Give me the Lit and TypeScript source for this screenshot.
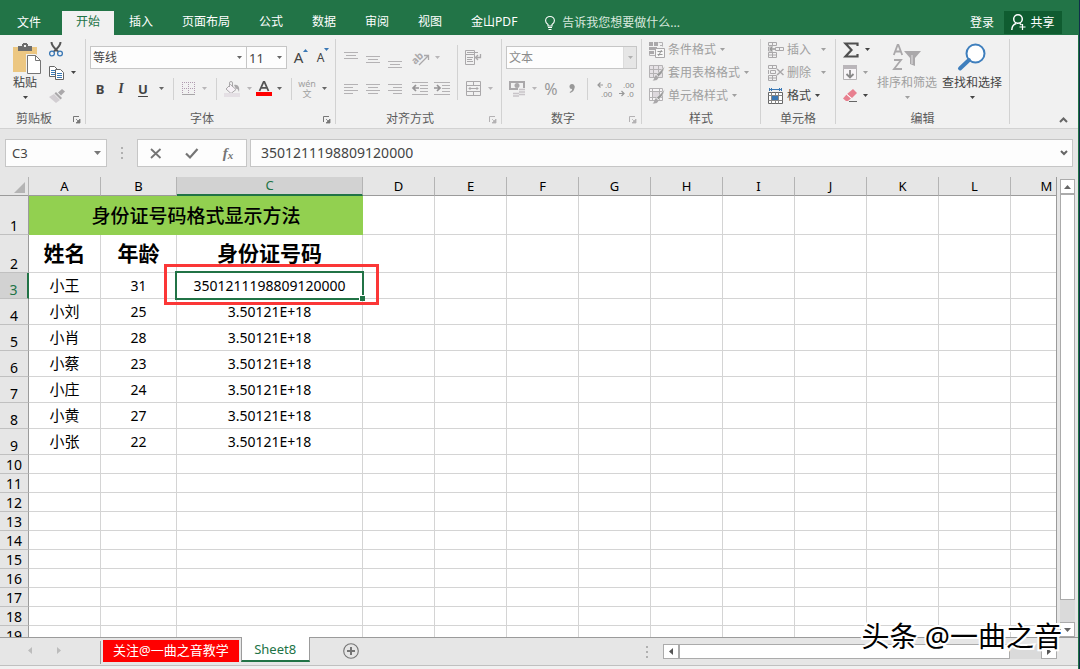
import { LitElement, html, css, svg, nothing } from "lit";
import type { TemplateResult } from "lit";
import { customElement, property } from "lit/decorators.js";
import { classMap } from "lit/directives/class-map.js";

const icon = (w: number, h: number, body: unknown) =>
  html`<svg width=${w} height=${h} viewBox="0 0 ${w} ${h}" fill="none" aria-hidden="true">${body}</svg>`;

const caret = () => icon(5, 3, svg`<path d="M0 0h5L2.500 3z" fill="currentColor"/>`);

const lines = (ys: number[], spans: number[][]) =>
  ys.map((y, i) => svg`<path d="M${spans[i][0]} ${y + 0.5}H${spans[i][1]}" stroke="#b4b2b4"/>`);

const FULL = [0, 14];
const MID = [2, 12];

const icons = {
  paste: icon(28, 32, svg`
    <path d="M0 4h24v25H0z" fill="#ecc782"/>
    <path d="M5 3h4V1h1V0h4v1h1v2h4v5H5z" fill="#6d6d6d"/><path d="M11 2h2v2h-2z" fill="#f1f1f1"/>
    <path d="M13 11h10l5 5v15H13z" fill="#f1f1f1"/>
    <path d="M14.500 12.500h8l5 5v13h-13z" fill="#fff" stroke="#757575"/><path d="M22.500 12.500v5h5" stroke="#757575"/>`),
  cut: icon(14, 15, svg`
    <path d="M2.500 0c0 4 3 6 6.500 9.500M11.500 0c0 4-3 6-6.500 9.500" stroke="#555" stroke-width="2"/>
    <circle cx="3" cy="11.500" r="2.400" stroke="#3a78b5" stroke-width="1.300"/>
    <circle cx="11" cy="11.500" r="2.400" stroke="#3a78b5" stroke-width="1.300"/>`),
  copy: icon(16, 14, svg`
    <path d="M.5.500h5l3 3v7h-8z" fill="#fff" stroke="#666"/>
    <path d="M2 4.500h4M2 6.500h4M2 8.500h4" stroke="#3a78b5"/>
    <path d="M6.500 3.500h5l3 3v7h-8z" fill="#fff" stroke="#666"/>
    <path d="M8 7.500h5M8 9.500h5M8 11.500h5" stroke="#3a78b5"/>`),
  brush: icon(16, 14, svg`
    <path d="M13 0l3 2.500-4 4L9 3.500z" fill="#aaa8aa"/>
    <path d="M7 3l6 6-1.500 1.500-6-6z" fill="#aaa8aa"/><path d="M5 5l6 6-4 3L0 8z" fill="#d2ced2"/>`),
  grow: html`<span class="sized big">A</span>${icon(5, 3, svg`<path d="M0 3h5L2.500 0z" fill="#3a78b5"/>`)}`,
  shrink: html`<span class="sized">A</span>${icon(5, 3, svg`<path d="M0 0h5L2.500 3z" fill="#3a78b5"/>`)}`,
  border: icon(13, 13, svg`
    <path d="M.5 0v12M6.500 0v12M12.500 0v12M0 .500h13M0 6.500h13" stroke="#b09cb0" stroke-dasharray="1 1"/>
    <path d="M0 12.500h13" stroke="#a8a6a8"/>`),
  fill: icon(17, 16, svg`
    <path d="M6.500 3.500l5.500 5-5 4-5-4.500z" fill="#f7f2f7" stroke="#aaa8aa"/>
    <path d="M5.500 6V2a1.500 1.500 0 0 1 3 0v4" stroke="#aaa8aa"/>
    <path d="M10 4c4-1 6 2 5 7-1-3-2-4-3-3z" fill="#aaa8aa"/><path d="M0 12h16v4H0z" fill="#e4dfe4"/>`),
  fontColor: icon(16, 15, svg`
    <path d="M0 11h16v4H0z" fill="#f00"/>
    <path d="M3.500 10L7.600 1h.8l4.100 9M5.500 6.800h5" stroke="#555" stroke-width="1.800"/>`),
  top: icon(14, 20, lines([4, 7, 10], [FULL, MID, FULL])),
  middle: icon(14, 20, lines([8, 11, 14], [FULL, MID, FULL])),
  bottom: icon(14, 20, lines([13, 16, 19], [FULL, MID, FULL])),
  left: icon(14, 10, lines([0, 3, 6, 9], [FULL, [0, 9], FULL, [0, 9]])),
  center: icon(14, 10, lines([0, 3, 6, 9], [FULL, MID, FULL, MID])),
  right: icon(14, 10, lines([0, 3, 6, 9], [FULL, [5, 14], FULL, [5, 14]])),
  rotate: icon(17, 16, svg`
    <text x="-1" y="11" transform="rotate(-45 6 8)" class="slant">ab</text>
    <path d="M7 15l9-9M12 5.500h4.500V10" stroke="#aaa8aa" stroke-width="1.300"/>`),
  outdent: icon(16, 13, svg`
    ${lines([0, 3, 6, 9, 12], [[0, 16], [8, 16], [8, 16], [8, 16], [0, 16]])}
    <path d="M1 6h6M4 3L1 6l3 3" stroke="#969496" stroke-width="1.700"/>`),
  indent: icon(16, 13, svg`
    ${lines([0, 3, 6, 9, 12], [[0, 16], [8, 16], [8, 16], [8, 16], [0, 16]])}
    <path d="M0 6h6M3 3l3 3-3 3" stroke="#969496" stroke-width="1.700"/>`),
  wrap: icon(16, 15, svg`
    <path d="M.5.500h9v4h-9zM.5 4.500h9v10h-9z" stroke="#aaa8aa"/>
    <path d="M2 2.500h11M2 7.500h6M2 9.500h5M2 11.500h6" stroke="#aaa8aa"/>
    <path d="M15.500 4v3.500H11M13 5l-2.500 2.500L13 10" stroke="#aaa8aa" stroke-width="1.300"/>`),
  merge: icon(15, 15, svg`
    <path d="M.5.500h14v14H.5zM.5 4.500h14M.5 10.500h14M7.500 0v4M7.500 11v4" stroke="#aaa8aa"/>
    <path d="M3 7.500h9M4.500 6L3 7.500 4.500 9M10.500 6L12 7.500 10.500 9" stroke="#aaa8aa"/>`),
  money: icon(17, 16, svg`
    <path d="M1 1h14v7H1z" stroke="#aaa8aa" stroke-width="2"/><circle cx="8" cy="4.500" r="2.500" fill="#aaa8aa"/>
    <path d="M9 7h7v8H9z" fill="#f1f1f1"/>
    <path d="M10 8.500h6M10 11h6M10 13.500h6M4 12.500h6M4 15h6" stroke="#c8c4c8" stroke-width="1.500"/>`),
  comma: icon(6, 9, svg`<circle cx="3" cy="2.500" r="2.500" fill="#999"/><path d="M5.500 2c.300 4-1.500 6-4.500 7l-.3-1C2.500 7 3.500 6 3 4z" fill="#999"/>`),
  moreDec: icon(15, 16, svg`
    <path d="M1 4h5M3.500 1.500L1 4l2.500 2.500" stroke="#999" stroke-width="1.200"/>
    <text x="8" y="7" class="tiny">.0</text><text x="4" y="16" class="tiny">.00</text>`),
  lessDec: icon(15, 16, svg`
    <text x="4" y="7" class="tiny">.00</text><text x="8" y="16" class="tiny">.0</text>
    <path d="M0 12.500h5M2.500 10L5 12.500 2.500 15" stroke="#999" stroke-width="1.200"/>`),
  conditional: icon(16, 16, svg`
    <path d="M0 0h4v4H0zM5 0h4v4H5zM0 5h8v3H0zM0 9h5v3H0z" fill="#aaa8aa"/>
    <path d="M9.500.500h4v4M.5 12v1.500H6M11 3.500h3" stroke="#b4b2b4"/>
    <path d="M6.500 6.500h9v9h-9z" fill="#f8f8f8" stroke="#aaa8aa"/>
    <path d="M8.500 9.500h5M8.500 12.500h5M12.500 8l-3 6" stroke="#999"/>`),
  tableStyle: icon(16, 16, svg`
    <path d="M.5.500h13v12H.5z" fill="#e6e2e6" stroke="#b4b2b4"/><path d="M.5 4.500h13M.5 8.500h13M4.500.500v12M9.500.500v12" stroke="#b4b2b4"/>
    <path d="M15.500 1.500c-1 5-3 8-6 10l-2-2c3-2 5-5 8-8z" fill="#999" stroke="#f1f1f1" stroke-width=".5"/>
    <path d="M7 10l2.500 2.500c-1 3-3 3-6 3 2-1 1.500-4 3.500-5.500z" fill="#aaa8aa"/>`),
  cellStyle: icon(16, 16, svg`
    <path d="M.5.500h13v12H.5z" fill="#f6f4f6" stroke="#b4b2b4"/><path d="M.5 3.500h13M3.500.500v12M10.500.500v12M.5 9.500h13" stroke="#b4b2b4"/>
    <path d="M4 4h6v5H4z" fill="#ddd8dd"/>
    <path d="M15.500 1.500c-1 5-3 8-6 10l-2-2c3-2 5-5 8-8z" fill="#999" stroke="#f1f1f1" stroke-width=".5"/>
    <path d="M7 10l2.500 2.500c-1 3-3 3-6 3 2-1 1.500-4 3.500-5.500z" fill="#aaa8aa"/>`),
  insert: icon(16, 16, svg`
    <path d="M.5.500h8v3h-8zM4.500.500v3M.5 10.500h8v5h-8zM4.500 10.500v5M.5 13h8M3.500 5H.5v4h3" stroke="#aaa8aa"/>
    <path d="M7.500 5.500h8v3h-8zM11.500 5.500v3" stroke="#aaa8aa"/><path d="M2 7h5M4.500 4.500L2 7l2.500 2.500" stroke="#999" stroke-width="1.300"/>`),
  remove: icon(16, 16, svg`
    <path d="M.5.500h8v3h-8zM4.500.500v3M.5 10.500h8v5h-8zM4.500 10.500v5M.5 13h8M.5 5v4M2.500 5.500h5v3h-5z" stroke="#aaa8aa"/>
    <path d="M9 4l6.500 6M15.500 4L9 10" stroke="#aaa8aa" stroke-width="1.500"/>`),
  format: icon(16, 16, svg`
    <path d="M1.500 0v3M13.500 0v3M2 1.500h11M4 0L2.500 1.500 4 3M11 0l1.500 1.500L11 3" stroke="#3a78b5"/>
    <path d="M.5 4.500h14v11H.5z" fill="#fff" stroke="#666"/>
    <path d="M.5 7.500h14M.5 12.500h14M3.500 4.500v11M10.500 4.500v11M7.500 4.500v11" stroke="#888"/><path d="M4 8h6v4H4z" fill="#3a78b5"/>`),
  sum: icon(16, 16, svg`<path d="M14.500 4V1.500H2.500L8.500 8l-6 6.500h12V12" stroke="#505050" stroke-width="2.200"/>`),
  fillDown: icon(14, 15, svg`
    <path d="M.5.500h13v14H.5z" fill="#f8f5f8" stroke="#b4b2b4"/><path d="M0 0h14v4H0z" fill="#bab6ba"/>
    <path d="M7 5v7M3.500 9L7 12.500 10.500 9" stroke="#888" stroke-width="1.800"/>`),
  eraser: icon(14, 13, svg`
    <path d="M10 0l4 4-5 5-5-4z" fill="#e8808f"/><path d="M3.500 5.500l4.500 4-3 2.500H3L0 9.500z" fill="#e8808f"/>
    <path d="M3.500 5l5 4.500" stroke="#fff"/><path d="M6 12.500h8" stroke="#666"/>`),
  sort: icon(28, 27, svg`
    <path d="M.8 12L4.600 2h.8L9.200 12M2.300 8.500h5.400" stroke="#aaa8aa" stroke-width="1.800"/>
    <path d="M1 17h7L1 26h8" stroke="#aaa8aa" stroke-width="1.800"/>
    <path d="M11 8h17l-6 7v8l-5-2v-6z" fill="#aaa8aa"/><path d="M19 12v9" stroke="#e4e2e4"/>`),
  find: icon(28, 28, svg`
    <circle cx="17.500" cy="10.500" r="9" fill="#fff" stroke="#3f7fbd" stroke-width="2"/>
    <path d="M11 17l-9 8.500" stroke="#3f7fbd" stroke-width="4" stroke-linecap="round"/>`),
  launcher: icon(7, 7, svg`<path d="M.5 6V.500H6" stroke="currentColor"/><path d="M7 3v4H3zM3 3l3 3" fill="currentColor" stroke="currentColor" stroke-width=".8"/>`),
  bulb: icon(10, 14, svg`
    <path d="M3 10V8.500C1.500 7.500.6 6.300.6 4.700a4.400 4.200 0 0 1 8.800 0C9.400 6.300 8.500 7.500 7 8.500V10z" stroke="#fff" stroke-width="1.100"/>
    <path d="M3 11.500h4M3.500 13.500h3" stroke="#fff"/>`),
  person: icon(15, 17, svg`
    <circle cx="7" cy="5" r="4.300" stroke="#fff" stroke-width="1.500"/>
    <path d="M.8 16c0-3 1.500-5.500 4.500-6.500M8.500 9.300l2 1.700" stroke="#fff" stroke-width="1.500"/><path d="M11.500 10v6M8.500 13h6" stroke="#fff" stroke-width="1.200"/>`),
  chevronUp: icon(9, 6, svg`<path d="M1 5l3.500-3.500L8 5" stroke="#666" stroke-width="2"/>`),
  chevronDown: icon(8, 6, svg`<path d="M1 1l3 3 3-3" stroke="#666" stroke-width="2"/>`),
  cross: icon(12, 11, svg`<path d="M1 1l9.500 9M10.500 1L1 10" stroke="#757575" stroke-width="1.800"/>`),
  check: icon(14, 11, svg`<path d="M1 5.500l4 4L12.500 1" stroke="#757575" stroke-width="2.200"/>`),
  plus: icon(16, 16, svg`<circle cx="8" cy="8" r="7.300" stroke="#757575" stroke-width="1.100"/><path d="M8 4v8M4 8h8" stroke="#757575" stroke-width="2"/>`),
  triLeft: icon(4, 7, svg`<path d="M4 0v7L0 3.500z" fill="currentColor"/>`),
  triRight: icon(4, 7, svg`<path d="M0 0v7l4-3.500z" fill="currentColor"/>`),
  triUp: icon(7, 4, svg`<path d="M0 4h7L3.500 0z" fill="currentColor"/>`),
  triDown: icon(7, 4, svg`<path d="M0 0h7L3.500 4z" fill="currentColor"/>`),
  dots: icon(2, 12, svg`<path d="M0 0h2v2H0zM0 5h2v2H0zM0 10h2v2H0z" fill="#b0b0b0"/>`),
  corner: icon(11, 11, svg`<path d="M11 0v11H0z" fill="#b4b4b4"/>`),
};

const reset = css`
  :host, * { box-sizing: border-box; }
  svg { display: block; flex: none; overflow: visible; }
  button, input, select {
    margin: 0; padding: 0; border: 0; border-radius: 0; background: none;
    font: inherit; color: inherit; outline: none; appearance: none;
  }
  button { display: flex; align-items: center; justify-content: center; white-space: nowrap; }
`;

@customElement("ribbon-tabs")
export class RibbonTabs extends LitElement {
  static styles = [reset, css`
    :host { display: flex; align-items: flex-start; height: 35px; padding-top: 11px; background: #227447; color: #fff; }
    nav { display: flex; gap: 1px; }
    .tab { padding: 0 14px 2px; height: 24px; }
    .file { width: 58px; margin-right: 3px; padding: 0; }
    .active { background: #f1f1f1; color: #217346; }
    .tell { gap: 7px; margin-left: 14px; height: 24px; color: #d8e8de; }
    .account { display: flex; height: 23px; margin-left: auto; margin-right: 16px; gap: 10px; }
    .share { width: 58px; gap: 4px; background: #0f5c30; }
  `];

  render() {
    const tabs = ["开始", "插入", "页面布局", "公式", "数据", "审阅", "视图", "金山PDF"];
    return html`
      <nav>
        <button class="tab file">文件</button>
        ${tabs.map((t, i) => html`<button class=${classMap({ tab: true, active: i === 0 })}>${t}</button>`)}
      </nav>
      <button class="tell">${icons.bulb}告诉我您想要做什么...</button>
      <div class="account">
        <button>登录</button>
        <button class="share">${icons.person}共享</button>
      </div>`;
  }
}

@customElement("ribbon-group")
export class RibbonGroup extends LitElement {
  @property() label = "";
  @property({ type: Boolean }) launcher = false;
  @property({ type: Boolean }) dim = false;

  static styles = [reset, css`
    :host { display: flex; flex-direction: column; flex: none; border-right: 1px solid #d2d2d2; }
    .body { flex: 1; min-height: 0; display: flex; }
    footer { display: flex; align-items: flex-start; height: 12px; line-height: 14px; color: #5c5c5c; text-align: center; }
    footer span { flex: 1; }
    footer button { width: 17px; height: 12px; color: #777; padding-top: 3px; }
    footer .dim { color: #b4b2b4; }
  `];

  render() {
    return html`
      <div class="body"><slot></slot></div>
      <footer>
        <span>${this.label}</span>
        ${this.launcher ? html`<button class=${classMap({ dim: this.dim })} aria-label="${this.label}设置">${icons.launcher}</button>` : nothing}
      </footer>`;
  }
}

@customElement("ribbon-bar")
export class RibbonBar extends LitElement {
  static styles = [reset, css`
    :host { display: flex; height: 94px; padding: 4px 0; background: #f1f1f1; border-bottom: 1px solid #d2d2d2; color: #444; }
    .clipboard { width: 86px; }
    .font { width: 250px; }
    .align { width: 166px; }
    .number { width: 140px; }
    .styles { width: 119px; }
    .cells { width: 75px; }
    .editing { width: 174px; }
    .off { color: #a0a0a0; }
    .c14, .c12, .combo i { color: #666; }
    .off.c14, .off.c12 { color: #b8b6b8; }

    .two { display: flex; flex-direction: column; gap: 8px; padding: 7px 0 0 4px; }
    .row { display: flex; height: 23px; align-items: center; }
    .row .c14, .row .c12 { height: 22px; }
    .three { display: flex; flex-direction: column; gap: 2px; }
    .three .item { height: 21px; justify-content: flex-start; }
    .w16 { width: 16px; } .w18 { width: 18px; } .w20 { width: 20px; } .w22 { width: 22px; }
    .c14 { width: 14px; } .c12 { width: 12px; }
    .row button { flex: none; }
    .gap { margin-left: 3px; }
    .sep { flex: none; width: 11px; height: 22px; background: linear-gradient(#d2d2d2, #d2d2d2) center / 1px 100% no-repeat; }
    .split { width: 1px; height: 55px; margin: 6px 0 0 4px; background: #d2d2d2; }

    .combo { display: grid; height: 23px; align-items: center; border: 1px solid #c6c6c6; background: #fdfdfd; }
    .combo select { grid-area: 1 / 1; width: 100%; height: 21px; padding-left: 2px; }
    .combo i { grid-area: 1 / 1; justify-self: end; display: flex; align-items: center; justify-content: center; width: 13px; height: 21px; pointer-events: none; }
    .combo.face { width: 157px; }
    .combo.size { width: 41px; margin-left: -1px; font-size: 13px; }
    .combo.kind { width: 131px; }
    .combo select:disabled { opacity: 1; color: #8c8c8c; }
    .combo.kind i { background: #e6e6e6; color: #b0b0b0; border-left: 1px solid #dcdcdc; }

    .resize { width: 22px; align-items: flex-start; }
    .resize svg { margin-top: 3px; }
    .sized { font: 12px/26px "Noto Sans", sans-serif; color: #444; }
    .sized.big { font-size: 15px; line-height: 23px; }
    .letter { font: 700 13px/22px "Noto Sans", sans-serif; color: #444; }
    .serif { font-style: italic; font-family: "Liberation Serif", serif; font-size: 14px; }
    .under { text-decoration: underline; text-underline-offset: 2px; }
    .percent { font: 16px/22px "Noto Sans", sans-serif; color: #999; }
    .tiny { font: 8px "Liberation Sans", sans-serif; fill: #888; }
    .slant { font: 700 10px "Noto Sans", sans-serif; fill: #aaa8aa; }
    .phonetic { flex-direction: column; line-height: 10px; font-size: 9px; color: #a0a0a0; }

    .large { flex-direction: column; justify-content: flex-start; padding-top: 4px; line-height: 16px; }
    .large > svg { margin-top: 5px; }
    .large .art { height: 32px; display: flex; align-items: flex-start; }
    .large.paste { width: 42px; margin-left: 4px; }
    .large.paste .art { padding-left: 4px; }
    .side { padding-left: 3px; }
    .side .item { gap: 6px; }
    .cmds { padding-left: 7px; }
    .cmds .item { gap: 3px; }
    .cmds .item svg:last-child { margin-left: 1px; }
    .cmds .wide svg:last-child { margin-left: 7px; }
    .editcol { padding-left: 7px; width: 38px; }
    .editcol .item { gap: 6px; }
    .search { margin-left: 5px; }
    .sort { margin-left: 3px; }
    .collapse { align-self: flex-end; margin-left: auto; width: 30px; height: 9px; }
  `];

  private btn(content: unknown, cls: string, name: string) {
    return html`<button class=${cls} aria-label=${name}>${content}</button>`;
  }

  private item(art: TemplateResult, text: string, cls = "") {
    return html`<button class="item ${cls}">${art}${text}${caret()}</button>`;
  }

  render() {
    const b = this.btn;
    return html`
      <ribbon-group class="clipboard" label="剪贴板" launcher>
        <button class="large paste"><span class="art">${icons.paste}</span>粘贴${caret()}</button>
        <div class="three side">
          ${b(icons.cut, "item", "剪切")}
          ${b(html`${icons.copy}${caret()}`, "item", "复制")}
          ${b(icons.brush, "item", "格式刷")}
        </div>
      </ribbon-group>

      <ribbon-group class="font" label="字体" launcher>
        <div class="two">
          <div class="row">
            <label class="combo face"><select aria-label="字体"><option>等线</option></select><i>${caret()}</i></label>
            <label class="combo size"><select aria-label="字号"><option>11</option></select><i>${caret()}</i></label>
            ${b(icons.grow, "resize gap", "增大字号")}${b(icons.shrink, "resize", "减小字号")}
          </div>
          <div class="row">
            ${b("B", "w20 letter", "加粗")}${b("I", "w22 letter serif", "倾斜")}
            ${b("U", "w22 letter under", "下划线")}${b(caret(), "c14", "下划线样式")}<span class="sep"></span>
            ${b(icons.border, "w18", "边框")}${b(caret(), "c14 off", "边框样式")}<span class="sep"></span>
            ${b(icons.fill, "w20", "填充颜色")}${b(caret(), "c14 off", "填充颜色选项")}
            ${b(icons.fontColor, "w16", "字体颜色")}${b(caret(), "c14", "字体颜色选项")}<span class="sep"></span>
            ${b(html`<span>wén</span><span>文</span>`, "w20 phonetic", "拼音")}${b(caret(), "c14", "拼音选项")}
          </div>
        </div>
      </ribbon-group>

      <ribbon-group class="align" label="对齐方式" launcher dim>
        <div class="two">
          <div class="row">
            ${b(icons.top, "w22", "顶端对齐")}${b(icons.middle, "w22", "垂直居中")}${b(icons.bottom, "w22", "底端对齐")}
            ${b(icons.rotate, "w22 gap", "方向")}${b(caret(), "c12 off", "方向选项")}
          </div>
          <div class="row">
            ${b(icons.left, "w22", "左对齐")}${b(icons.center, "w22", "居中")}${b(icons.right, "w22", "右对齐")}
            ${b(icons.outdent, "w22 gap", "减少缩进量")}${b(icons.indent, "w22", "增加缩进量")}
          </div>
        </div>
        <span class="split"></span>
        <div class="two">
          <div class="row">${b(icons.wrap, "w22", "自动换行")}</div>
          <div class="row">${b(icons.merge, "w22", "合并后居中")}${b(caret(), "c12 off", "合并选项")}</div>
        </div>
      </ribbon-group>

      <ribbon-group class="number" label="数字" launcher dim>
        <div class="two">
          <div class="row">
            <label class="combo kind"><select aria-label="数字格式" disabled><option>文本</option></select><i>${caret()}</i></label>
          </div>
          <div class="row">
            ${b(icons.money, "w22", "会计数字格式")}${b(caret(), "c12 off", "会计格式选项")}
            ${b("%", "w22 percent", "百分比样式")}${b(icons.comma, "w20", "千位分隔样式")}<span class="sep"></span>
            ${b(icons.moreDec, "w22", "增加小数位数")}${b(icons.lessDec, "w22", "减少小数位数")}
          </div>
        </div>
      </ribbon-group>

      <ribbon-group class="styles" label="样式">
        <div class="three cmds off">
          ${this.item(icons.conditional, "条件格式")}
          ${this.item(icons.tableStyle, "套用表格格式")}
          ${this.item(icons.cellStyle, "单元格样式")}
        </div>
      </ribbon-group>

      <ribbon-group class="cells" label="单元格">
        <div class="three cmds">
          ${this.item(icons.insert, "插入", "off wide")}
          ${this.item(icons.remove, "删除", "off wide")}
          ${this.item(icons.format, "格式")}
        </div>
      </ribbon-group>

      <ribbon-group class="editing" label="编辑">
        <div class="three editcol">
          ${b(html`${icons.sum}${caret()}`, "item", "自动求和")}
          ${b(html`${icons.fillDown}${caret()}`, "item off", "填充")}
          ${b(html`${icons.eraser}${caret()}`, "item", "清除")}
        </div>
        <button class="large off sort"><span class="art">${icons.sort}</span>排序和筛选${caret()}</button>
        <button class="large search"><span class="art">${icons.find}</span>查找和选择${caret()}</button>
      </ribbon-group>

      <button class="collapse" aria-label="折叠功能区">${icons.chevronUp}</button>`;
  }
}

@customElement("formula-bar")
export class FormulaBar extends LitElement {
  static styles = [reset, css`
    :host { display: flex; align-items: center; height: 48px; padding: 0 5px; background: #e6e6e6; color: #444; font-family: "Noto Sans", sans-serif; font-size: 14px; }
    .box { display: flex; align-items: center; height: 28px; border: 1px solid #c6c6c6; background: #fdfdfd; }
    .name { width: 102px; }
    .name input { flex: 1; min-width: 0; padding-left: 6px; font-size: 13px; }
    .name button { width: 18px; color: #777; }
    .grip { width: 30px; display: flex; justify-content: center; }
    .tools { width: 110px; margin-right: 3px; }
    .tools button { flex: 1; height: 26px; }
    .fx { font: italic 700 15px "Liberation Serif", serif; color: #757575; }
    .fx small { font-size: 11px; padding-top: 4px; }
    .formula { flex: 1; }
    .formula input { flex: 1; min-width: 0; height: 26px; padding: 0 0 2px 10px; }
    .formula button { width: 16px; height: 26px; }
  `];

  render() {
    return html`
      <div class="box name">
        <input aria-label="名称框" value="C3" /><button aria-label="名称列表">${icons.triDown}</button>
      </div>
      <span class="grip">${icons.dots}</span>
      <div class="box tools">
        <button aria-label="取消">${icons.cross}</button>
        <button aria-label="输入">${icons.check}</button>
        <button class="fx" aria-label="插入函数">f<small>x</small></button>
      </div>
      <div class="box formula">
        <input aria-label="编辑栏" value="3501211198809120000" /><button aria-label="展开编辑栏">${icons.chevronDown}</button>
      </div>`;
  }
}

const COLUMNS = "ABCDEFGHIJKLM".split("");
const PEOPLE = [
  ["小王", "31", "3501211198809120000"],
  ["小刘", "25", "3.50121E+18"],
  ["小肖", "28", "3.50121E+18"],
  ["小蔡", "23", "3.50121E+18"],
  ["小庄", "24", "3.50121E+18"],
  ["小黄", "27", "3.50121E+18"],
  ["小张", "22", "3.50121E+18"],
];

@customElement("sheet-grid")
export class SheetGrid extends LitElement {
  static styles = [reset, css`
    :host { display: flex; flex: 1; min-height: 0; background: #e6e6e6; }
    .view { flex: 1; min-width: 0; overflow: hidden; border-right: 1px solid #9b9b9b; background: linear-gradient(#e6e6e6 18px, #9b9b9b 18px, #9b9b9b 19px, #fff 19px); }
    table { table-layout: fixed; width: 1083px; border-collapse: separate; border-spacing: 0; color: #000; font-size: 14px; }
    .c-head { width: 29px; } .c-a { width: 72px; } .c-b { width: 76px; } .c-c { width: 186px; } .c-n { width: 72px; }
    th, td { padding: 0; overflow: hidden; white-space: nowrap; text-align: center; }
    th { font-weight: 400; background: #e6e6e6; font-family: "Noto Sans", sans-serif; }
    thead th { height: 19px; line-height: 18px; border-bottom: 1px solid #9b9b9b; border-right: 1px solid #b4b4b4; font-size: 13px; }
    thead .on { background: #d2d2d2; color: #217346; border-bottom: 2px solid #217346; line-height: 17px; }
    .all { text-align: right; }
    .all svg { margin: 2px 3px 0 auto; }
    tbody th { height: 19px; padding-top: 2px; line-height: 16px; vertical-align: bottom; border-right: 1px solid #9b9b9b; border-bottom: 1px solid #c0c0c0; font-size: 14px; }
    tbody .on { background: #d2d2d2; color: #217346; border-right: 2px solid #217346; }
    td { border-right: 1px solid #d4d4d4; border-bottom: 1px solid #d4d4d4; font-family: "Noto Sans", "Noto Sans CJK SC", sans-serif; }
    .title td { height: 39px; }
    .title .merged { background: #92d050; border: 0; font-size: 19px; font-weight: 500; line-height: 38px; }
    .heads td { height: 38px; font-size: 21px; font-weight: 700; line-height: 37px; }
    .data td { height: 26px; line-height: 25px; }
    .data .who { font-size: 15px; }
    .picked { position: relative; overflow: visible; }
    .cursor { position: absolute; inset: -2px; border: 2px solid #217346; }
    .cursor::after { content: ""; position: absolute; right: -3px; bottom: -3px; width: 5px; height: 5px; background: #217346; border: solid #fff; border-width: 1px 0 0 1px; }
    .callout { position: absolute; inset: -9px -17px -7px -13px; border: 3px solid #fb3737; }
    .bar { display: flex; flex-direction: column; width: 15px; margin: 2px 3px 0; background: #dadada; }
    .bar button { height: 15px; flex: none; background: #fff; border: 1px solid #ababab; color: #666; }
    .thumb { flex: 1; background: #fff; border: 1px solid #ababab; margin-bottom: 22px; }
  `];

  private blanks(n: number) {
    return Array.from({ length: n }, () => html`<td></td>`);
  }

  render() {
    return html`
      <div class="view">
        <table>
          <colgroup>
            <col class="c-head" /><col class="c-a" /><col class="c-b" /><col class="c-c" />
            ${COLUMNS.slice(3).map(() => html`<col class="c-n" />`)}
          </colgroup>
          <thead>
            <tr>
              <th class="all">${icons.corner}</th>
              ${COLUMNS.map((c) => html`<th scope="col" class=${classMap({ on: c === "C" })}>${c}</th>`)}
            </tr>
          </thead>
          <tbody>
            <tr class="title"><th scope="row">1</th><td class="merged" colspan="3">身份证号码格式显示方法</td>${this.blanks(10)}</tr>
            <tr class="heads"><th scope="row">2</th><td>姓名</td><td>年龄</td><td>身份证号码</td>${this.blanks(10)}</tr>
            ${PEOPLE.map((p, i) => html`
              <tr class="data">
                <th scope="row" class=${classMap({ on: i === 0 })}>${i + 3}</th>
                <td class="who">${p[0]}</td><td>${p[1]}</td>
                <td class=${classMap({ picked: i === 0 })}>${p[2]}${i === 0 ? html`<span class="cursor"></span><span class="callout"></span>` : nothing}</td>
                ${this.blanks(10)}
              </tr>`)}
            ${Array.from({ length: 10 }, (_, i) => html`<tr><th scope="row">${i + 10}</th>${this.blanks(13)}</tr>`)}
          </tbody>
        </table>
      </div>
      <div class="bar">
        <button aria-label="向上滚动">${icons.triUp}</button>
        <span class="thumb"></span>
        <button aria-label="向下滚动">${icons.triDown}</button>
      </div>`;
  }
}

@customElement("sheet-tabs")
export class SheetTabs extends LitElement {
  static styles = [reset, css`
    :host { display: flex; height: 28px; background: linear-gradient(#9b9b9b 1px, #e6e6e6 1px); font-size: 13px; }
    .nav { display: flex; width: 101px; height: 23px; margin-top: 4px; padding-left: 15px; border-right: 1px solid #9b9b9b; color: #bcbcbc; }
    .nav button { width: 29px; height: 18px; }
    .promo { height: 22px; margin: 3px 2px 0; padding: 0 10px 3px; background: #f00; color: #fff; }
    .current { width: 69px; height: 25px; background: #fff; color: #217346; border: solid #9b9b9b; border-width: 0 1px; border-bottom: 2px solid #217346; font-family: "Noto Sans", sans-serif; }
    .add { width: 24px; height: 27px; margin-left: 29px; }
    .grip { margin: 9px 15px 0 auto; }
    .scroll { display: flex; width: 394px; height: 15px; margin: 7px 21px 0 0; background: #dadada; }
    .scroll button { width: 16px; background: #fff; border: 1px solid #ababab; color: #555; }
    .thumb { flex: 1; margin-right: 31px; background: #fff; border: 1px solid #ababab; }
  `];

  render() {
    return html`
      <div class="nav">
        <button aria-label="上一个工作表">${icons.triLeft}</button>
        <button aria-label="下一个工作表">${icons.triRight}</button>
      </div>
      <button class="promo">关注@一曲之音教学</button>
      <button class="current">Sheet8</button>
      <button class="add" aria-label="新工作表">${icons.plus}</button>
      <span class="grip">${icons.dots}</span>
      <div class="scroll">
        <button aria-label="向左滚动">${icons.triLeft}</button>
        <span class="thumb"></span>
        <button aria-label="向右滚动">${icons.triRight}</button>
      </div>`;
  }
}

@customElement("app-root")
export class AppRoot extends LitElement {
  static styles = css`
    :host {
      position: relative; display: flex; flex-direction: column; box-sizing: border-box;
      height: 100vh; overflow: hidden; background: #217346; padding-right: 1px; border-right: 1px solid #10304a;
      font: 12px/16px "Noto Sans", "Noto Sans CJK SC", sans-serif;
    }
    .status { box-sizing: border-box; height: 4px; border-top: 1px solid #c0c0c0; background: #f1f1f1; }
    .mark {
      position: absolute; right: 17px; bottom: 16px; font-size: 28px; line-height: 34px; color: #000;
      -webkit-text-stroke: 4px #fff; paint-order: stroke fill; white-space: nowrap; pointer-events: none;
    }
  `;

  render() {
    return html`
      <ribbon-tabs></ribbon-tabs>
      <ribbon-bar></ribbon-bar>
      <formula-bar></formula-bar>
      <sheet-grid></sheet-grid>
      <sheet-tabs></sheet-tabs>
      <div class="status"></div>
      <div class="mark">头条 @一曲之音</div>`;
  }
}
